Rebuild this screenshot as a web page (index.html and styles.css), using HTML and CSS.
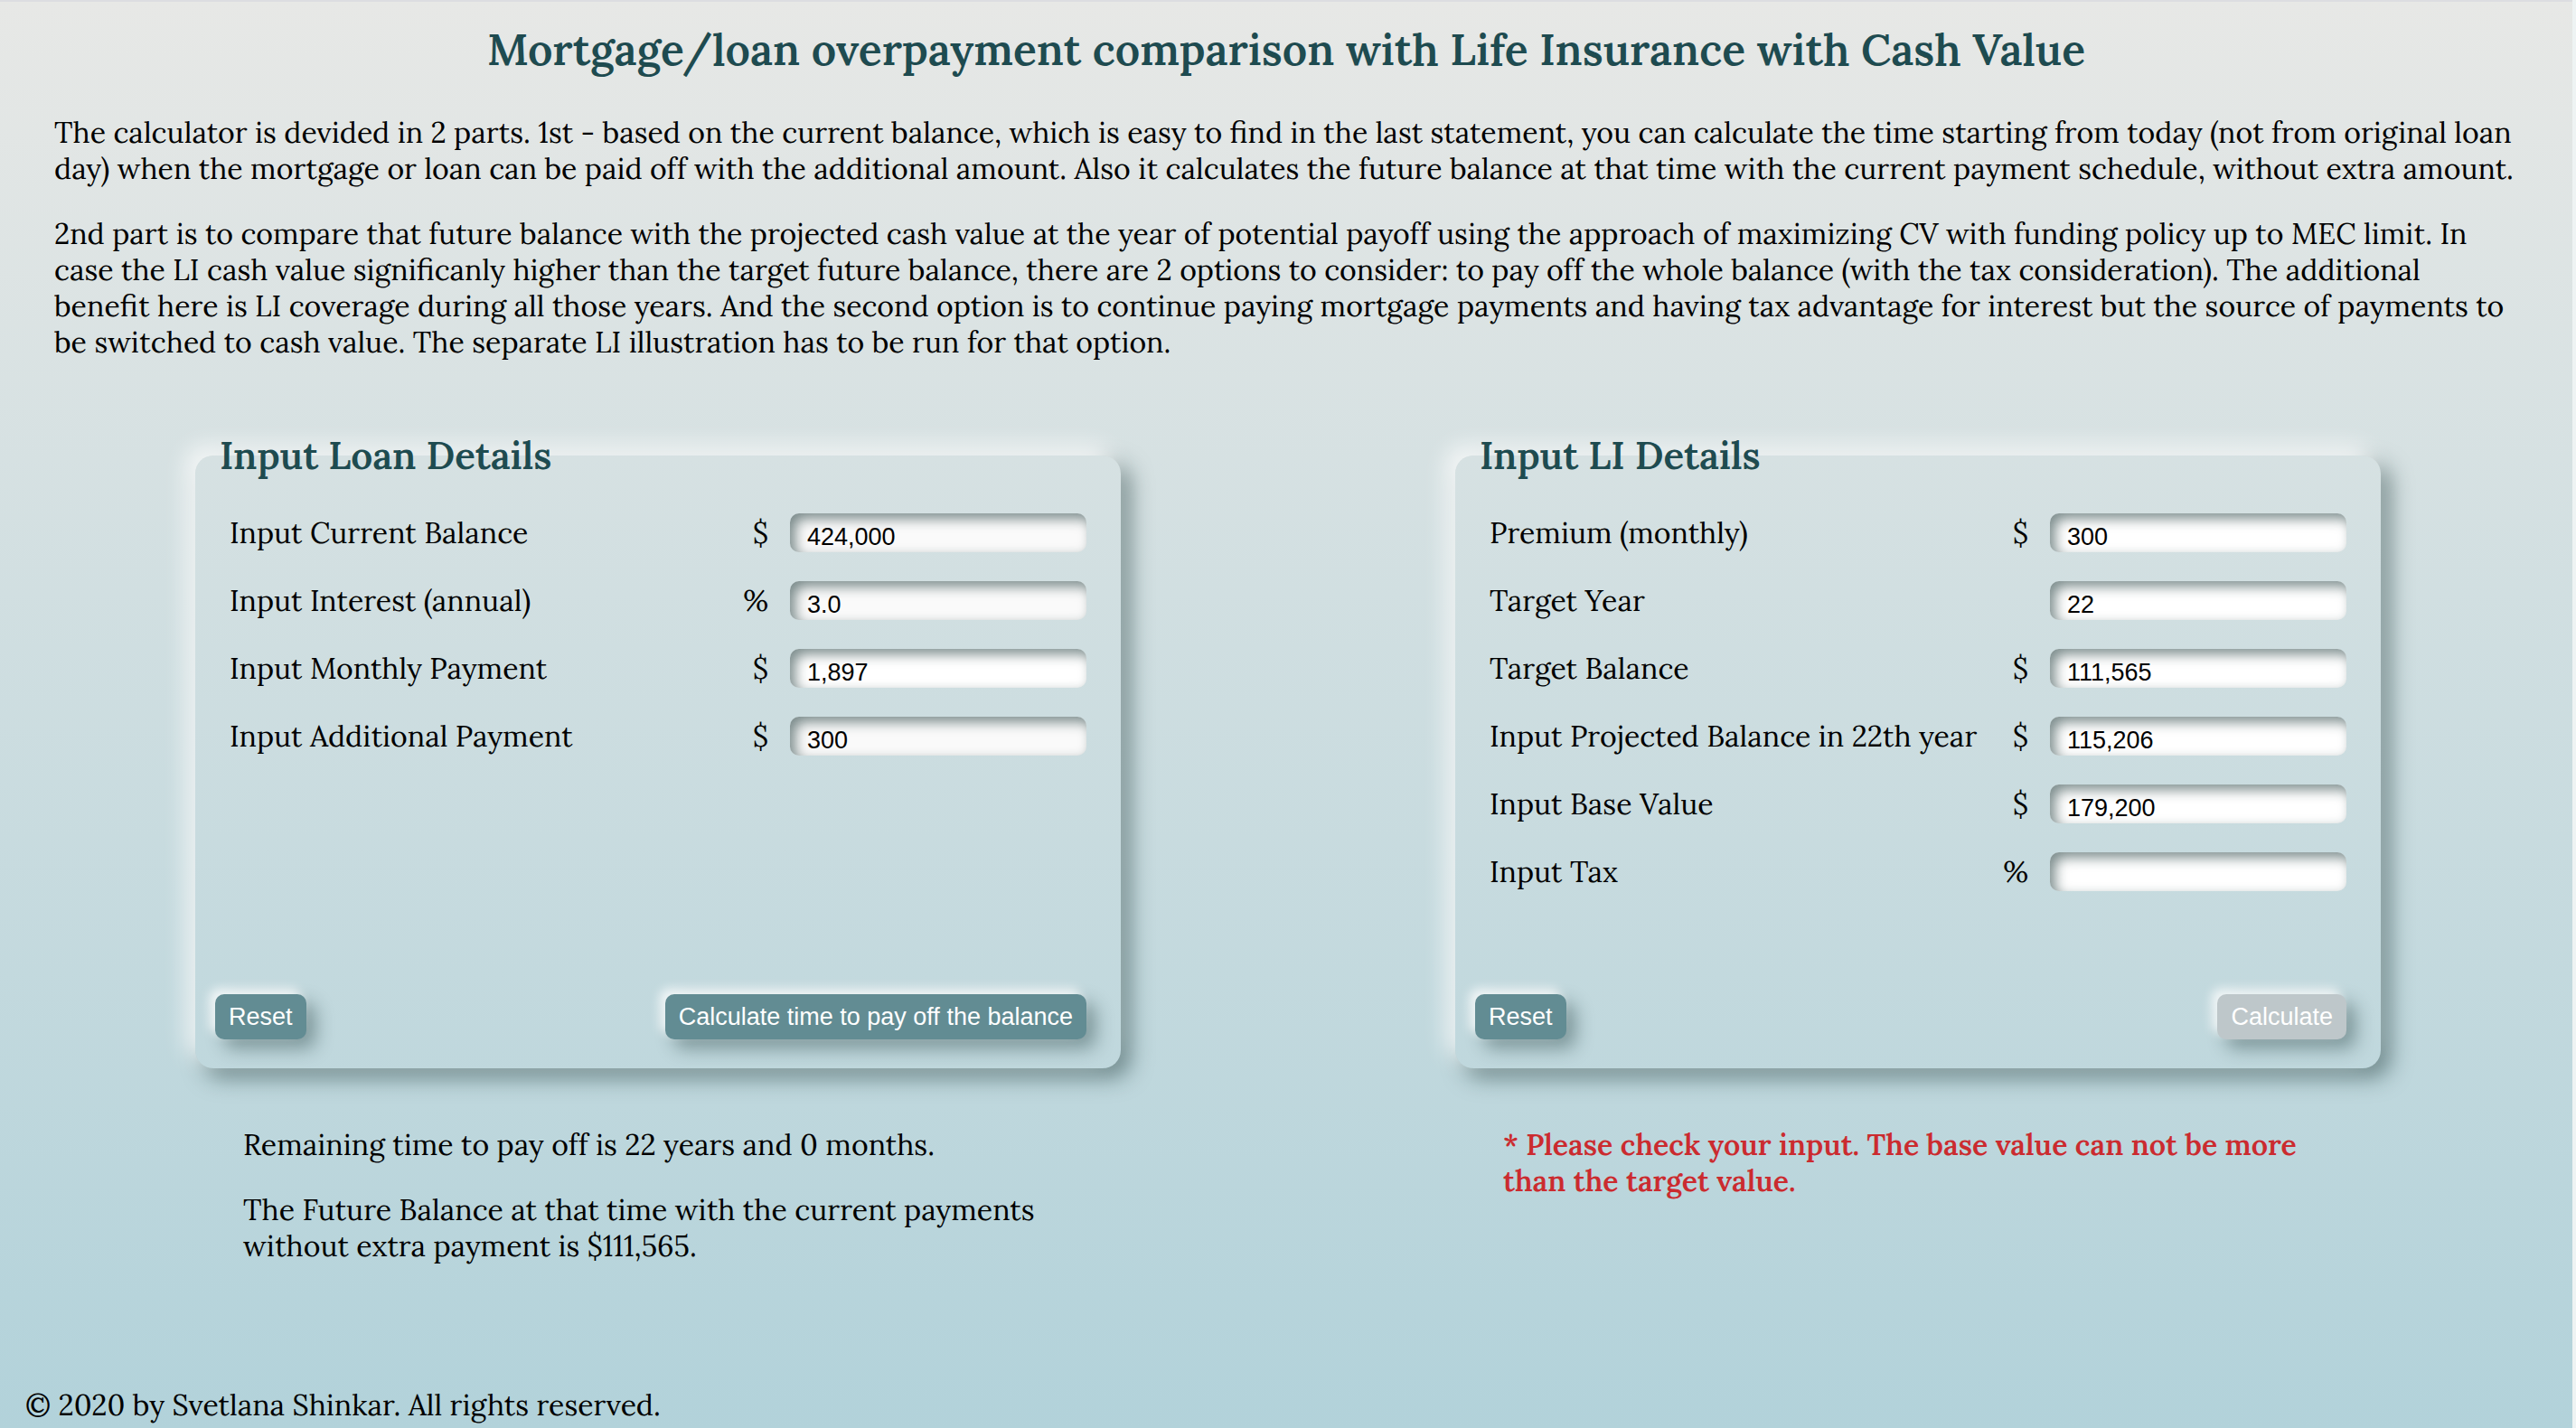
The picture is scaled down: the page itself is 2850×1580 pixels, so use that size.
FILE: index.html
```html
<!DOCTYPE html>
<html lang="en">
<head>
<meta charset="utf-8">
<title>Mortgage/loan overpayment comparison</title>
<link rel="stylesheet" href="styles.css">
</head>
<body class="page">
<header class="intro">
  <h1 class="title">Mortgage/loan overpayment comparison with Life Insurance with Cash Value</h1>
  <p class="text">The calculator is devided in 2 parts. 1st - based on the current balance, which is easy to find in the last statement, you can calculate the time starting from today (not from original loan day) when the mortgage or loan can be paid off with the additional amount. Also it calculates the future balance at that time with the current payment schedule, without extra amount.</p>
  <p class="text">2nd part is to compare that future balance with the projected cash value at the year of potential payoff using the approach of maximizing CV with funding policy up to MEC limit. In case the LI cash value significanly higher than the target future balance, there are 2 options to consider: to pay off the whole balance (with the tax consideration). The additional benefit here is LI coverage during all those years. And the second option is to continue paying mortgage payments and having tax advantage for interest but the source of payments to be switched to cash value. The separate LI illustration has to be run for that option.</p>
</header>
<main class="columns">
  <section class="column">
    <form>
      <fieldset class="card">
        <legend class="legend">Input Loan Details</legend>
        <div class="card-body">
          <div class="rows">
            <div class="row"><label for="balance">Input Current Balance</label><span class="unit">$</span><input class="field filled" id="balance" type="text" value="424,000"></div>
            <div class="row"><label for="interest">Input Interest (annual)</label><span class="unit">%</span><input class="field filled" id="interest" type="text" value="3.0"></div>
            <div class="row"><label for="payment">Input Monthly Payment</label><span class="unit">$</span><input class="field" id="payment" type="text" value="1,897"></div>
            <div class="row"><label for="extra">Input Additional Payment</label><span class="unit">$</span><input class="field filled" id="extra" type="text" value="300"></div>
          </div>
          <div class="actions">
            <button class="button" type="button">Reset</button>
            <button class="button" type="button">Calculate time to pay off the balance</button>
          </div>
        </div>
      </fieldset>
    </form>
    <div class="result">
      <p class="text">Remaining time to pay off is 22 years and 0 months.</p>
      <p class="text">The Future Balance at that time with the current payments without extra payment is $111,565.</p>
    </div>
  </section>
  <section class="column">
    <form>
      <fieldset class="card">
        <legend class="legend">Input LI Details</legend>
        <div class="card-body">
          <div class="rows">
            <div class="row"><label for="premium">Premium (monthly)</label><span class="unit">$</span><input class="field" id="premium" type="text" value="300"></div>
            <div class="row"><label for="year">Target Year</label><span class="unit"></span><input class="field" id="year" type="text" value="22"></div>
            <div class="row"><label for="target">Target Balance</label><span class="unit">$</span><input class="field" id="target" type="text" value="111,565"></div>
            <div class="row"><label for="projected">Input Projected Balance in 22th year</label><span class="unit">$</span><input class="field" id="projected" type="text" value="115,206"></div>
            <div class="row"><label for="base">Input Base Value</label><span class="unit">$</span><input class="field" id="base" type="text" value="179,200"></div>
            <div class="row"><label for="tax">Input Tax</label><span class="unit">%</span><input class="field" id="tax" type="text" value=""></div>
          </div>
          <div class="actions">
            <button class="button" type="button">Reset</button>
            <button class="button" type="button" disabled>Calculate</button>
          </div>
        </div>
      </fieldset>
    </form>
    <div class="result">
      <p class="text error">* Please check your input. The base value can not be more than the target value.</p>
    </div>
  </section>
</main>
<footer class="footer">© 2020 by Svetlana Shinkar. All rights reserved.</footer>
</body>
</html>
```
FILE: styles.css
```css
* { box-sizing: border-box; }

html { background: #eef3f3; }

.page {
  display: flex;
  flex-direction: column;
  min-height: 100vh;
  margin: 0 4px 0 0;
  border-top: 2px solid #dcdde1;
  background: linear-gradient(#e7e8e6, #b2d2da);
  color: #000;
  font-family: Lora, "Liberation Serif", serif;
  font-size: 32px;
  line-height: 40px;
}

.intro { padding: 23px 60px 0; }

.title {
  margin: 0 0 42px;
  color: #1e4b50;
  font-size: 48px;
  font-weight: 600;
  line-height: 60px;
  text-align: center;
}

.text { margin: 0 0 32px; }

.columns {
  display: grid;
  grid-template-columns: 1fr 1fr;
  padding: 47px 28px 0 30px;
}

.column { padding: 0 184px 0 186px; }

.card {
  min-width: 0;
  margin: 0;
  padding: 0 38px 32px 22px;
  border: 0;
  border-radius: 20px;
  box-shadow: -10px -10px 24px rgba(255, 255, 255, .8), 10px 10px 24px rgba(20, 50, 50, .5);
}

.legend {
  padding: 0 5px;
  color: #1e4b50;
  font-size: 42px;
  font-weight: 600;
  line-height: 52px;
}

.card-body {
  display: flex;
  flex-direction: column;
  justify-content: space-between;
  min-height: 620px;
  padding-top: 22px;
}

.rows { padding-left: 16px; }

.row {
  display: grid;
  grid-template-columns: 1fr 56px 328px;
  align-items: center;
  height: 75px;
}

.unit {
  padding-right: 24px;
  justify-self: end;
}

.field {
  width: 100%;
  height: 43px;
  padding: 9px 19px 0;
  border: 0;
  border-radius: 10px;
  background: #fff;
  box-shadow: inset 6px 6px 14px rgba(20, 50, 50, .55);
  color: #000;
  font-family: "Liberation Sans", Arial, sans-serif;
  font-size: 27px;
}

.filled { background: #fafafa; }

.actions {
  display: flex;
  justify-content: space-between;
}

.button {
  height: 50px;
  padding: 0 15px;
  border: 0;
  border-radius: 10px;
  background: #628c93;
  box-shadow: -6px -6px 12px rgba(255, 255, 255, .8), 10px 10px 20px rgba(20, 50, 50, .4);
  color: #fff;
  font-family: "Liberation Sans", Arial, sans-serif;
  font-size: 27px;
}

.button:disabled { background: #bec7ca; }

.result { padding: 65px 53px 0; }

.error {
  color: #cb2b2f;
  font-weight: 600;
}

.footer {
  margin-top: auto;
  padding: 0 28px 5px;
}
```
